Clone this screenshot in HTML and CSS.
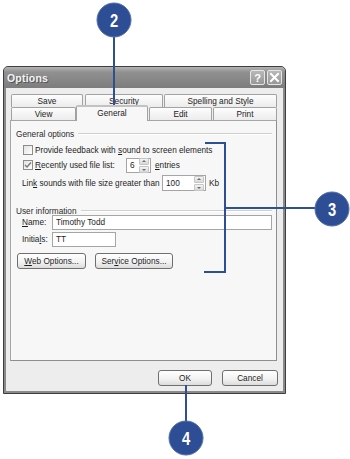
FILE: index.html
```html
<!doctype html>
<html>
<head>
  <meta charset="utf-8">
  <meta name="viewport" content="width=device-width,initial-scale=1">
  <title>Options</title>
  <link rel="stylesheet" href="styles.css">
</head>
<body>
  <div class="page">
    <div class="dialog">
      <div class="titlebar">
        <span class="title">Options</span>
        <div class="title-btns">
          <span class="tbtn">?</span>
          <span class="tbtn">
            <svg width="11" height="11" viewBox="0 0 11 11"><path d="M2 2 L9 9 M9 2 L2 9" stroke="#fff" stroke-width="2" stroke-linecap="square"/></svg>
          </span>
        </div>
      </div>
      <div class="client">
        <div class="tabs">
          <div class="tab-row">
            <div class="tab w-save">Save</div>
            <div class="tab w-security">Security</div>
            <div class="tab w-spelling">Spelling and Style</div>
          </div>
          <div class="tab-row">
            <div class="tab w-view">View</div>
            <div class="tab w-general active">General</div>
            <div class="tab w-edit">Edit</div>
            <div class="tab w-print">Print</div>
          </div>
        </div>
        <div class="panel">
          <div class="group-title"><span>General options</span></div>
          <div class="check-row first">
            <span class="box"></span>
            <span>Provide feedback with <u>s</u>ound to screen elements</span>
          </div>
          <div class="check-row">
            <span class="box">
              <svg width="8" height="8" viewBox="0 0 8 8"><path d="M1 4 L3 6 L7 1.5" fill="none" stroke="#7a7a7a" stroke-width="1.4"/></svg>
            </span>
            <span class="lbl-recent"><u>R</u>ecently used file list:</span>
            <span class="spin w-small"><span class="val">6</span><span class="arrows"><i class="up"></i><i class="down"></i></span></span>
            <span class="unit"><u>e</u>ntries</span>
          </div>
          <div class="field-row link">
            <span class="lbl-link">Lin<u>k</u> sounds with file size greater than</span>
            <span class="spin w-large"><span class="val">100</span><span class="arrows"><i class="up"></i><i class="down"></i></span></span>
            <span class="unit kb">Kb</span>
          </div>
          <div class="group-title second"><span>User information</span></div>
          <div class="field-row name">
            <span class="lbl"><u>N</u>ame:</span>
            <span class="input w-name">Timothy Todd</span>
          </div>
          <div class="field-row initials">
            <span class="lbl">Initia<u>l</u>s:</span>
            <span class="input w-initials">TT</span>
          </div>
          <div class="btn-row">
            <button class="btn w-web"><u>W</u>eb Options...</button>
            <button class="btn w-service">Ser<u>v</u>ice Options...</button>
          </div>
        </div>
        <div class="footer">
          <button class="btn w-ok">OK</button>
          <button class="btn w-cancel">Cancel</button>
        </div>
      </div>
    </div>

    <!-- callouts -->
    <svg class="callouts" width="350" height="459" viewBox="0 0 350 459">
      <g stroke="#2f4f91" stroke-width="2" fill="none">
        <path d="M114 37 V117"/>
        <path d="M205 143 H225 V272 H204"/>
        <path d="M225 208 H315"/>
        <path d="M186 385 V422"/>
      </g>
      <g fill="#2d4e95" stroke="#5470ab" stroke-width="1">
        <circle cx="114" cy="20" r="17"/>
        <circle cx="332" cy="209" r="17"/>
        <circle cx="186" cy="438" r="17"/>
      </g>
      <g class="num" fill="#fff" text-anchor="middle">
        <text transform="translate(114 27) scale(0.82 1.05)">2</text>
        <text transform="translate(332 216) scale(0.82 1.05)">3</text>
        <text transform="translate(186 445) scale(0.82 1.05)">4</text>
      </g>
    </svg>
  </div>
</body>
</html>
```

FILE: styles.css
```css
body {
  margin: 0;
  background: #fff;
  font-family: "Liberation Sans", Arial, sans-serif;
  font-size: 8.25px;
  color: #1e1e1e;
}

.page {
  position: relative;
  width: 350px;
  height: 459px;
  overflow: hidden;
  padding: 66px 0 0 3px;
  box-sizing: border-box;
  white-space: nowrap;
}

.dialog {
  width: 283px;
  height: 328px;
  box-sizing: border-box;
  border: 1px solid #3e3e3e;
  border-radius: 5px 5px 0 0;
  background: #8a8a8a;
  display: flex;
  flex-direction: column;
}

.titlebar {
  height: 21px;
  flex: none;
  display: flex;
  align-items: center;
  justify-content: space-between;
  padding: 0 3px;
  border-radius: 4px 4px 0 0;
  background: linear-gradient(#b4b4b4, #909090 25%, #858585 70%, #7c7c7c);
}

.title {
  font-weight: bold;
  font-size: 10.5px;
  color: #f4f4f4;
  text-shadow: 1px 1px 0 #555;
  letter-spacing: 0.2px;
}

.title-btns {
  display: flex;
  gap: 2px;
}

.tbtn {
  width: 15px;
  height: 15px;
  box-sizing: border-box;
  border: 1px solid #e6e6e6;
  border-radius: 2px;
  background: linear-gradient(#b8b8b8, #989898);
  color: #fff;
  font-weight: bold;
  font-size: 11px;
  display: flex;
  align-items: center;
  justify-content: center;
}

.client {
  flex: 1;
  margin: 0 2px 2px;
  background: #ededed;
  padding: 6px 6px 0 4px;
}

/* tabs */
.tabs {
  margin-left: 1px;
}

.tab-row {
  display: flex;
  height: 13px;
}

.tab {
  box-sizing: border-box;
  height: 13px;
  border: 1px solid #a2a2a2;
  border-bottom: none;
  border-radius: 2px 2px 0 0;
  background: linear-gradient(#fdfdfd, #ececec);
  display: flex;
  align-items: center;
  justify-content: center;
  color: #222;
}

.tab.active {
  height: 16px;
  margin-top: -2px;
  margin-bottom: -1px;
  position: relative;
  z-index: 1;
  background: #f7f7f7;
  border-top: 2px solid #c2c2c2;
  padding-bottom: 2px;
}

.w-save { width: 72px; margin-right: 2px; }
.w-security { width: 78px; margin-right: 1px; }
.w-spelling { width: 113px; }
.w-view { width: 65px; }
.w-general { width: 72px; margin-right: 1px; }
.w-edit { width: 63px; margin-right: 1px; }
.w-print { width: 64px; }

/* panel */
.panel {
  height: 241px;
  box-sizing: border-box;
  border: 1px solid #a6a6a6;
  border-right-color: #8e8e8e;
  border-bottom-color: #8e8e8e;
  background: #f7f7f7;
  padding: 8px 4px 0 5px;
}

.group-title {
  height: 10px;
  display: flex;
  align-items: center;
  color: #2a2a2a;
}

.group-title::after {
  content: "";
  flex: 1;
  height: 1px;
  margin-left: 4px;
  background: #cfcfcf;
  border-bottom: 1px solid #fff;
}

.group-title.second {
  margin-top: 15px;
}

.check-row {
  height: 14px;
  margin: 1px 0 0 7px;
  display: flex;
  align-items: center;
}

.check-row.first {
  margin-top: 4px;
}

.box {
  flex: none;
  width: 10px;
  height: 10px;
  box-sizing: border-box;
  border: 1px solid #8c8c8c;
  background: linear-gradient(135deg, #e2e2e2, #fff);
  margin-right: 2px;
  display: flex;
  align-items: center;
  justify-content: center;
}

.lbl-recent {
  flex: none;
  width: 91px;
}

.spin {
  flex: none;
  box-sizing: border-box;
  height: 15px;
  border: 1px solid #a5a5a5;
  background: #fff;
  display: flex;
  align-items: center;
  justify-content: space-between;
  padding: 0 1px 0 3px;
}

.spin.w-small { width: 25px; }
.spin.w-large { width: 44px; height: 16px; }

.arrows {
  display: flex;
  flex-direction: column;
  gap: 1px;
}

.arrows i {
  width: 8px;
  height: 5px;
  border-radius: 1px;
  background: linear-gradient(#f4f4f4, #d8d8d8);
  border: 1px solid #c6c6c6;
  position: relative;
}

.arrows i::after {
  content: "";
  position: absolute;
  left: 2px;
  border-left: 2px solid transparent;
  border-right: 2px solid transparent;
}

.arrows .up::after {
  top: 1px;
  border-bottom: 2px solid #6d6d6d;
}

.arrows .down::after {
  top: 2px;
  border-top: 2px solid #6d6d6d;
}

.unit {
  margin-left: 4px;
}

.unit.kb {
  margin-left: 3px;
}

.field-row {
  display: flex;
  align-items: center;
  margin-left: 6px;
}

.field-row.link {
  height: 16px;
  margin-top: 3px;
}

.lbl-link {
  flex: none;
  width: 140px;
}

.field-row.name {
  height: 15px;
  margin-top: -1px;
}

.field-row.initials {
  height: 15px;
  margin-top: 2px;
}

.lbl {
  flex: none;
  width: 30px;
}

.input {
  flex: none;
  box-sizing: border-box;
  height: 15px;
  border: 1px solid #a5a5a5;
  background: #fff;
  padding-left: 3px;
  display: flex;
  align-items: center;
}

.w-name { width: 220px; }
.w-initials { width: 64px; }

.btn-row {
  display: flex;
  gap: 9px;
  margin: 6px 0 0 1px;
}

.btn {
  box-sizing: border-box;
  height: 16px;
  padding: 0;
  border: 1px solid #6f6f6f;
  border-radius: 3px;
  background: linear-gradient(#ffffff, #f1f1f1 60%, #dcdcdc);
  font: inherit;
  color: #1e1e1e;
}

.w-web { width: 69px; }
.w-service { width: 78px; }
.w-ok { width: 54px; }
.w-cancel { width: 56px; }

.footer {
  display: flex;
  justify-content: flex-end;
  gap: 10px;
  margin: 9px -1px 0 0;
}

.callouts {
  position: absolute;
  left: 0;
  top: 0;
  pointer-events: none;
}

.num text {
  font-family: "Liberation Sans Narrow", "Liberation Sans", Arial, sans-serif;
  font-weight: bold;
  font-size: 18px;
}
```
